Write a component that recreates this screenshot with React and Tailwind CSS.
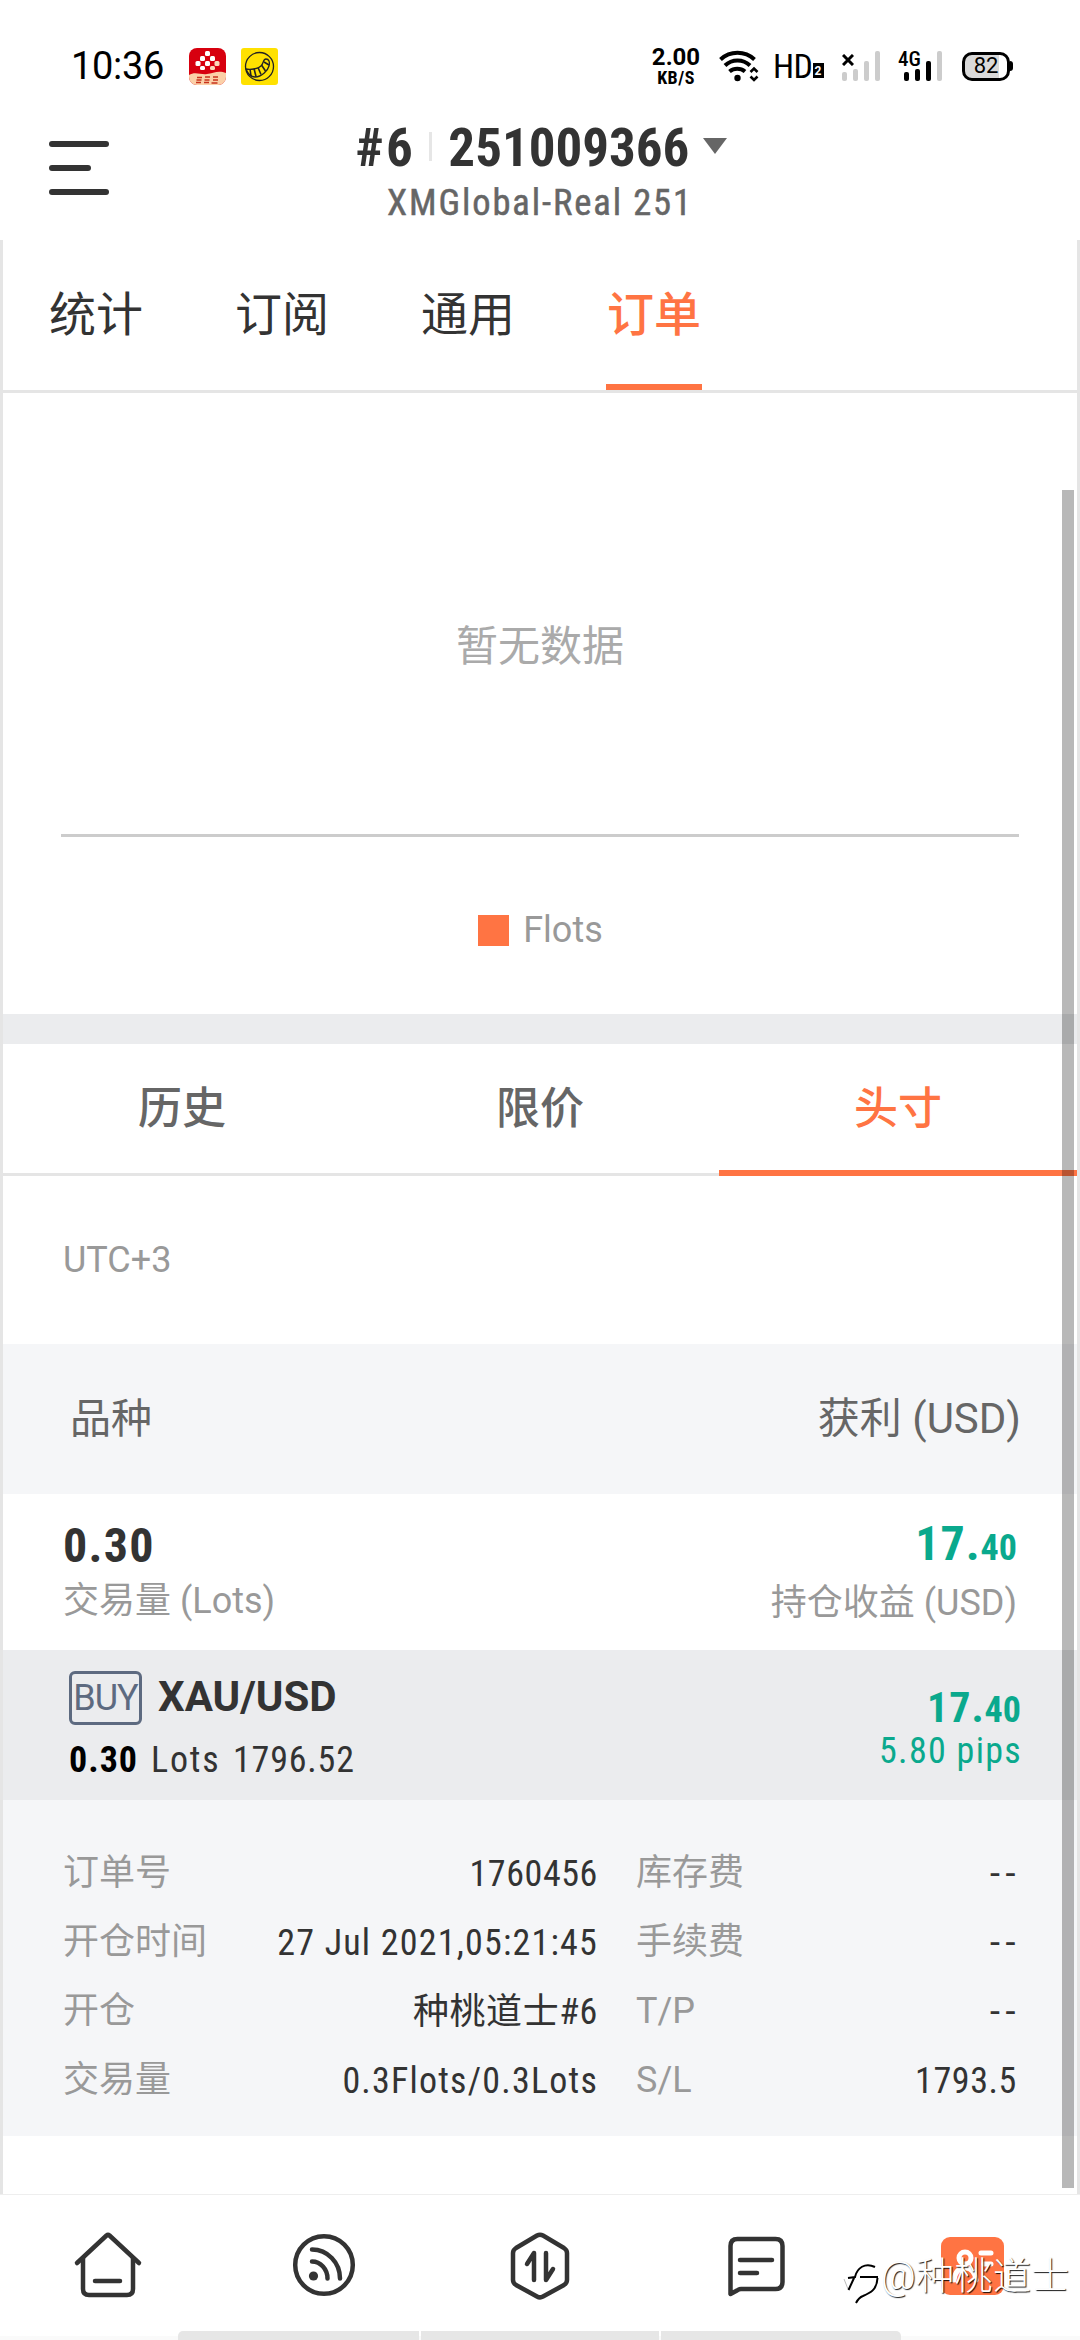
import React, { useState } from 'react';

const topTabs = ['统计', '订阅', '通用', '订单'];
const listTabs = ['历史', '限价', '头寸'];

const leftDetails = [
  { label: '订单号', value: '1760456', tracking: 'tracking-[0.6px]' },
  { label: '开仓时间', value: '27 Jul 2021,05:21:45', tracking: 'tracking-[1.2px]' },
  { label: '开仓', value: '种桃道士#6', tracking: 'tracking-[0.6px]' },
  { label: '交易量', value: '0.3Flots/0.3Lots', tracking: 'tracking-[1.2px]' },
];

const rightDetails = [
  { label: '库存费', value: '--' },
  { label: '手续费', value: '--' },
  { label: 'T/P', value: '--' },
  { label: 'S/L', value: '1793.5', tracking: 'tracking-[0.6px]' },
];

const din = "font-['Roboto_Condensed','Noto_Sans_CJK_SC',sans-serif]";

function RedAppIcon() {
  return (
    <svg width="37" height="37" viewBox="0 0 37 37">
      <rect width="37" height="37" rx="8" fill="#d7000f" />
      <path d="M0 27c6-4 12 0 18-1s12-4 19-1v4a8 8 0 0 1-8 8H8a8 8 0 0 1-8-8z" fill="#fbd0a8" />
      <g fill="#fff" stroke="none">
        <rect x="16" y="3" width="5" height="5" rx="1.5" />
        <rect x="11" y="8" width="5" height="5" rx="1.5" />
        <rect x="21" y="8" width="5" height="5" rx="1.5" />
        <rect x="6.500" y="13" width="5" height="5" rx="1.5" />
        <rect x="16" y="13" width="5" height="5" rx="1.5" />
        <rect x="25.500" y="13" width="5" height="5" rx="1.5" fill="#fbd9bb" />
        <rect x="11" y="18" width="5" height="4" rx="1.5" />
        <rect x="21" y="18" width="5" height="4" rx="1.5" fill="#fbd9bb" />
      </g>
      <path d="M8 29.500h5M7.500 32h5M7 34.500h5M16 29h5M15.500 32h5M15 34.500h5M24 29h5M24 32h5M22.500 35h6" stroke="#c8321c" strokeWidth="1.6" />
    </svg>
  );
}

function YellowAppIcon() {
  return (
    <svg width="37" height="37" viewBox="0 0 37 37" fill="none" stroke="#222" strokeWidth="1.3">
      <rect width="37" height="37" rx="3" fill="#ffe100" stroke="none" />
      <circle cx="18.500" cy="18.500" r="14" />
      <path d="M5 21c4 1 12 0 15-3s2-7 5-7 4 3 3 7-7 11-14 11c-4 0-7-3-9-8z" />
      <path d="M9 21l1 7M13 20.500l2 8M17 19.500l3 7M20.500 17l4 6M23 14l5 3" strokeWidth="1.6" />
    </svg>
  );
}

function WifiIcon() {
  return (
    <svg width="41" height="33" viewBox="0 0 41 33" fill="none" stroke="#000" strokeWidth="4">
      <path d="M1.500 9.500a25 25 0 0 1 34 0" />
      <path d="M6 15.500a18 18 0 0 1 25 0" />
      <path d="M10.500 21.500a12 12 0 0 1 15.500 0" />
      <circle cx="18.500" cy="28" r="3.200" fill="#000" stroke="none" />
      <path d="M31.500 22l3.500-3.500 3.500 3.500M31.500 26.500l3.500 3.500 3.500-3.500" strokeWidth="2.600" />
    </svg>
  );
}

function SignalBars({ colors, children }) {
  return (
    <div className="relative h-[30px] w-[38px]">
      <svg width="38" height="30" viewBox="0 0 38 30">
        <rect x="0" y="21" width="5" height="9" rx="2" fill={colors[0]} />
        <rect x="11" y="18" width="5" height="12" rx="2" fill={colors[1]} />
        <rect x="22" y="10" width="5" height="20" rx="2" fill={colors[2]} />
        <rect x="33" y="0" width="5" height="30" rx="2" fill={colors[3]} />
      </svg>
      {children}
    </div>
  );
}

function StatusBar() {
  return (
    <div className="flex h-[104px] items-center pt-[28px] text-black">
      <span className="ml-[71px] w-[118px] text-[38px] leading-none tracking-[-0.3px]">10:36</span>
      <RedAppIcon />
      <div className="w-[15px]" />
      <YellowAppIcon />
      <div className="ml-[372px] flex w-[52px] flex-col items-center font-bold">
        <span className="text-[24px] font-bold leading-[23px]">2.00</span>
        <span className={`${din} text-[18px] leading-[17px] tracking-[0.5px]`}>KB/S</span>
      </div>
      <div className="ml-[17px]">
        <WifiIcon />
      </div>
      <div className="ml-[13px] flex w-[53px] items-end">
        <span className={`${din} text-[34px] leading-[30px] tracking-[-0.5px]`}>HD</span>
        <span className="mb-[3px] flex h-[15px] w-[11px] items-center justify-center bg-black text-[12px] font-bold leading-none text-white">2</span>
      </div>
      <div className="ml-[16px]">
        <SignalBars colors={['#ccc', '#ccc', '#ccc', '#ccc']}>
          <svg className="absolute left-0 top-[3px]" width="12" height="12" viewBox="0 0 12 12" stroke="#000" strokeWidth="3">
            <path d="M1 1l10 10M11 1L1 11" />
          </svg>
        </SignalBars>
      </div>
      <div className="ml-[24px]">
        <SignalBars colors={['#000', '#000', '#000', '#ccc']}>
          <span className={`${din} absolute left-[-6px] top-[-2px] text-[21px] font-medium leading-[20px]`}>4G</span>
        </SignalBars>
      </div>
      <div className="ml-[20px] flex items-center">
        <div className="flex h-[29px] w-[48px] items-center justify-center rounded-[10px] border-[3px] border-black bg-[linear-gradient(90deg,#d9d9d9_80%,#fff_80%)] text-[22px] leading-none">
          82
        </div>
        <div className="h-[10px] w-[3px] rounded-r bg-black" />
      </div>
    </div>
  );
}

function Header() {
  return (
    <div className="grid h-[136px] grid-cols-[300px_1fr_300px] text-[#333]">
      <div className="flex flex-col gap-[18px] pl-[49px] pt-[37px]">
        <span className="h-[6px] w-[60px] rounded-full bg-[#333]" />
        <span className="h-[6px] w-[42px] rounded-full bg-[#333]" />
        <span className="h-[6px] w-[60px] rounded-full bg-[#333]" />
      </div>
      <div className={`${din} flex flex-col items-center pt-[14px]`}>
        <div className="flex h-[60px] items-center pl-[3px] text-[53px] font-bold leading-none">
          <span className="tracking-[2.5px]">#6</span>
          <span className="ml-[14px] mr-[16px] mt-[-4px] h-[29px] w-[3px] bg-[#e6e6e6]" />
          <span>251009366</span>
          <svg className="ml-[14px] mt-[-5px]" width="24" height="16" viewBox="0 0 24 16">
            <path d="M0 0h24L12 16z" fill="#666" />
          </svg>
        </div>
        <div className="flex h-[50px] items-center text-[36.5px] leading-none tracking-[1.9px] text-[#666] [-webkit-text-stroke:0.5px_#666]">XMGlobal-Real 251</div>
      </div>
    </div>
  );
}

function Amount({ big, small, bigClass }) {
  return (
    <div className={`${din} flex items-baseline font-bold leading-none text-[#0aa98d]`}>
      <span className={bigClass}>{big}</span>
      <span className="text-[36px]">{small}</span>
    </div>
  );
}

function DetailColumn({ rows, className }) {
  return (
    <div className={className}>
      {rows.map((row) => (
        <div key={row.label} className="flex h-[69px] items-center justify-between text-[36px] leading-none">
          <span className="pt-[2px] text-[#999]">{row.label}</span>
          {row.value === '--' ? (
            <span className="mr-[-4px] pt-[5px] tracking-[5.5px] text-[#333]">--</span>
          ) : (
            <span className={`${din} pt-[4px] text-[#333] ${row.tracking}`}>{row.value}</span>
          )}
        </div>
      ))}
    </div>
  );
}

function BottomNav() {
  return (
    <div className="relative flex h-[146px] flex-col border-t border-[#eee]">
      <div className="grid h-[142px] grid-cols-5 justify-items-center">
        <svg className="mt-[36px]" width="72" height="70" viewBox="0 0 72 70" fill="none" stroke="#333" strokeWidth="4.500" strokeLinecap="round" strokeLinejoin="round">
          <path d="M5 32L34.500 4.500q1.500-1.300 3 0L67 32" />
          <path d="M11 27v31q0 6 6 6h38q6 0 6-6V27" />
          <path d="M23 50h25" />
        </svg>
        <svg className="mt-[36px]" width="66" height="68" viewBox="0 0 66 68" fill="none" stroke="#333" strokeWidth="4.500" strokeLinecap="round">
          <circle cx="33" cy="34" r="28.800" />
          <path d="M21 18.500a28 29 0 0 1 28 29M21 30.500a15.500 17 0 0 1 15.500 17" />
          <circle cx="22.500" cy="45" r="4.600" fill="#333" stroke="none" />
        </svg>
        <svg className="mt-[36px]" width="66" height="70" viewBox="0 0 66 70" fill="none" stroke="#333" strokeWidth="4.500" strokeLinecap="round" strokeLinejoin="round">
          <path d="M30 4.500q3-1.700 6 0L57 17q3 2 3 5v27q0 3-3 5L36 65.500q-3 1.700-6 0L9 54q-3-2-3-5V22q0-3 3-5z" />
          <path d="M20 33l7-11v27M39 22v27l7-11" />
        </svg>
        <svg className="mt-[36px]" width="64" height="70" viewBox="0 0 64 70" fill="none" stroke="#333" strokeWidth="4.500" strokeLinecap="round" strokeLinejoin="round">
          <path d="M6.500 63V15q0-7 7-7h38q7 0 7 7v36q0 7-7 7H17q-2 0-4 1.500z" />
          <path d="M16 29h32M16 42h17" />
        </svg>
        <svg className="mt-[42px]" width="63" height="58" viewBox="0 0 63 58" fill="none" stroke="#fff" strokeWidth="5" strokeLinecap="round">
          <rect width="63" height="58" rx="9" fill="#ff7443" stroke="none" />
          <circle cx="24" cy="21" r="6" />
          <path d="M40 16h10M43 27h7M13 43c1-8 5-12 11-12s10 4 11 12" />
        </svg>
      </div>
      <div className="h-[4px] bg-[#fafafa]" />
      <div className="absolute bottom-0 left-[178px] flex h-[9px] w-[723px] gap-[2px] overflow-hidden rounded-t-[5px]">
        <div className="w-[241px] bg-[#e6e6e6]" />
        <div className="w-[238px] bg-[#e6e6e6]" />
        <div className="flex-1 bg-[#e6e6e6]" />
      </div>
      <div className="absolute left-[843px] top-[55px] flex items-start">
        <svg className="mt-[13px]" width="38" height="42" viewBox="0 0 38 42" fill="none" stroke="#000" strokeWidth="2">
          <path d="M1 16l4 10" stroke="#bbb" strokeWidth="1" />
          <path d="M5.500 27l6-13M5 15l7-1C14 5 22-1 32 4M17 14h18M34.500 15C34 27 27 30 20 33c-3 1-5 3-7 7" />
        </svg>
        <span className="mt-[7px] whitespace-nowrap text-[38px] font-light leading-none tracking-[0.4px] text-white [text-shadow:1px_1px_1px_rgba(0,0,0,0.9)]">@种桃道士</span>
      </div>
    </div>
  );
}

export default function App() {
  const [topTab, setTopTab] = useState('订单');
  const [listTab, setListTab] = useState('头寸');

  return (
    <div className="relative h-[2340px] w-[1080px] overflow-hidden bg-white font-['Roboto','Noto_Sans_CJK_SC',sans-serif]">
      <StatusBar />
      <Header />

      <main className="relative h-[1954px] border-x-[3px] border-[#e5e5e5]">
        <div className="flex h-[153px] gap-[90px] border-b-[3px] border-[#e5e5e5] pl-[45px]">
          {topTabs.map((tab) => (
            <button
              key={tab}
              onClick={() => setTopTab(tab)}
              className={`flex h-[150px] w-[96px] items-center justify-center whitespace-nowrap border-b-[6px] pt-[5px] text-[47px] leading-none ${
                tab === topTab ? 'border-[#ff7443] font-medium text-[#ff7443]' : 'border-transparent text-[#333]'
              }`}
            >
              {tab}
            </button>
          ))}
        </div>

        {/* Chart area */}
        <div className="flex h-[621px] flex-col items-center">
          <div className="flex h-[444px] w-[958px] items-center justify-center border-b-[3px] border-[#ccc] pt-[66px] text-[42px] leading-none text-[#aaa]">
            暂无数据
          </div>
          <div className="mt-[75px] flex items-center gap-[14px] pl-[1px] text-[36px] leading-none text-[#999]">
            <span className="h-[31px] w-[31px] bg-[#ff7443]" />
            Flots
          </div>
        </div>

        <div className="h-[30px] bg-[#ebecee]" />

        <div className="grid h-[132px] grid-cols-3">
          {listTabs.map((tab) => (
            <button
              key={tab}
              onClick={() => setListTab(tab)}
              className={`flex flex-col text-[44px] font-medium leading-none ${tab === listTab ? 'text-[#ff7443]' : 'text-[#666]'}`}
            >
              <span className="flex h-[126px] w-full items-center justify-center pt-[4px]">{tab}</span>
              <span className={tab === listTab ? 'h-[6px] w-full bg-[#ff7443]' : 'mt-[3px] h-[3px] w-full bg-[#e5e5e5]'} />
            </button>
          ))}
        </div>

        <div className="flex h-[168px] items-center pl-[60px] text-[36px] leading-none text-[#999]">UTC+3</div>

        <div className="flex h-[150px] items-center justify-between bg-[#f5f6f8] pl-[67px] pr-[56px] text-[42px] leading-none text-[#666]">
          <span className="text-[41px]">品种</span>
          <span>获利 (USD)</span>
        </div>

        {/* Totals */}
        <div className="flex h-[156px] justify-between pl-[60px] pr-[60px] text-[36px] text-[#999]">
          <div className="flex flex-col pt-[28px]">
            <span className={`${din} text-[48px] font-bold leading-[48px] tracking-[1.3px] text-[#333]`}>0.30</span>
            <span className="mt-[11px] leading-[40px]">交易量 (Lots)</span>
          </div>
          <div className="flex flex-col items-end pt-[26px]">
            <Amount big="17." small="40" bigClass="text-[48px] tracking-[1px]" />
            <span className="mt-[15px] leading-[40px]">持仓收益 (USD)</span>
          </div>
        </div>

        {/* Selected position */}
        <div className="flex h-[150px] justify-between bg-[#ebecee] pl-[66px] pr-[56px] text-[36px] text-[#333]">
          <div className="flex flex-col pt-[21px]">
            <div className="flex items-center">
              <span className="flex h-[54px] w-[73px] items-center justify-center rounded-[6px] border-[3px] border-[#5d6a80] leading-none tracking-[-1px] text-[#5d6a80]">
                BUY
              </span>
              <span className="ml-[16px] mt-[-3px] text-[42px] font-bold leading-none">XAU/USD</span>
            </div>
            <div className={`${din} mt-[15px] flex leading-[40px]`}>
              <span className="w-[82px] font-bold tracking-[1px] text-black">0.30</span>
              <span className="w-[82px] tracking-[1.8px]">Lots</span>
              <span className="tracking-[0.8px]">1796.52</span>
            </div>
          </div>
          <div className="flex flex-col items-end pt-[37px]">
            <Amount big="17." small="40" bigClass="text-[42px] tracking-[1px]" />
            <span className={`${din} mr-[-1px] mt-[2px] leading-[40px] tracking-[1.3px] text-[#0aa98d]`}>5.80 pips</span>
          </div>
        </div>

        <div className="flex h-[336px] bg-[#f5f6f8] pt-[37px]">
          <DetailColumn rows={leftDetails} className="ml-[60px] w-[535px]" />
          <DetailColumn rows={rightDetails} className="ml-[38px] w-[381px]" />
        </div>

        <div className="absolute right-[3px] top-[250px] h-[1698px] w-[12px] bg-black/28" />
      </main>

      <BottomNav />
    </div>
  );
}
